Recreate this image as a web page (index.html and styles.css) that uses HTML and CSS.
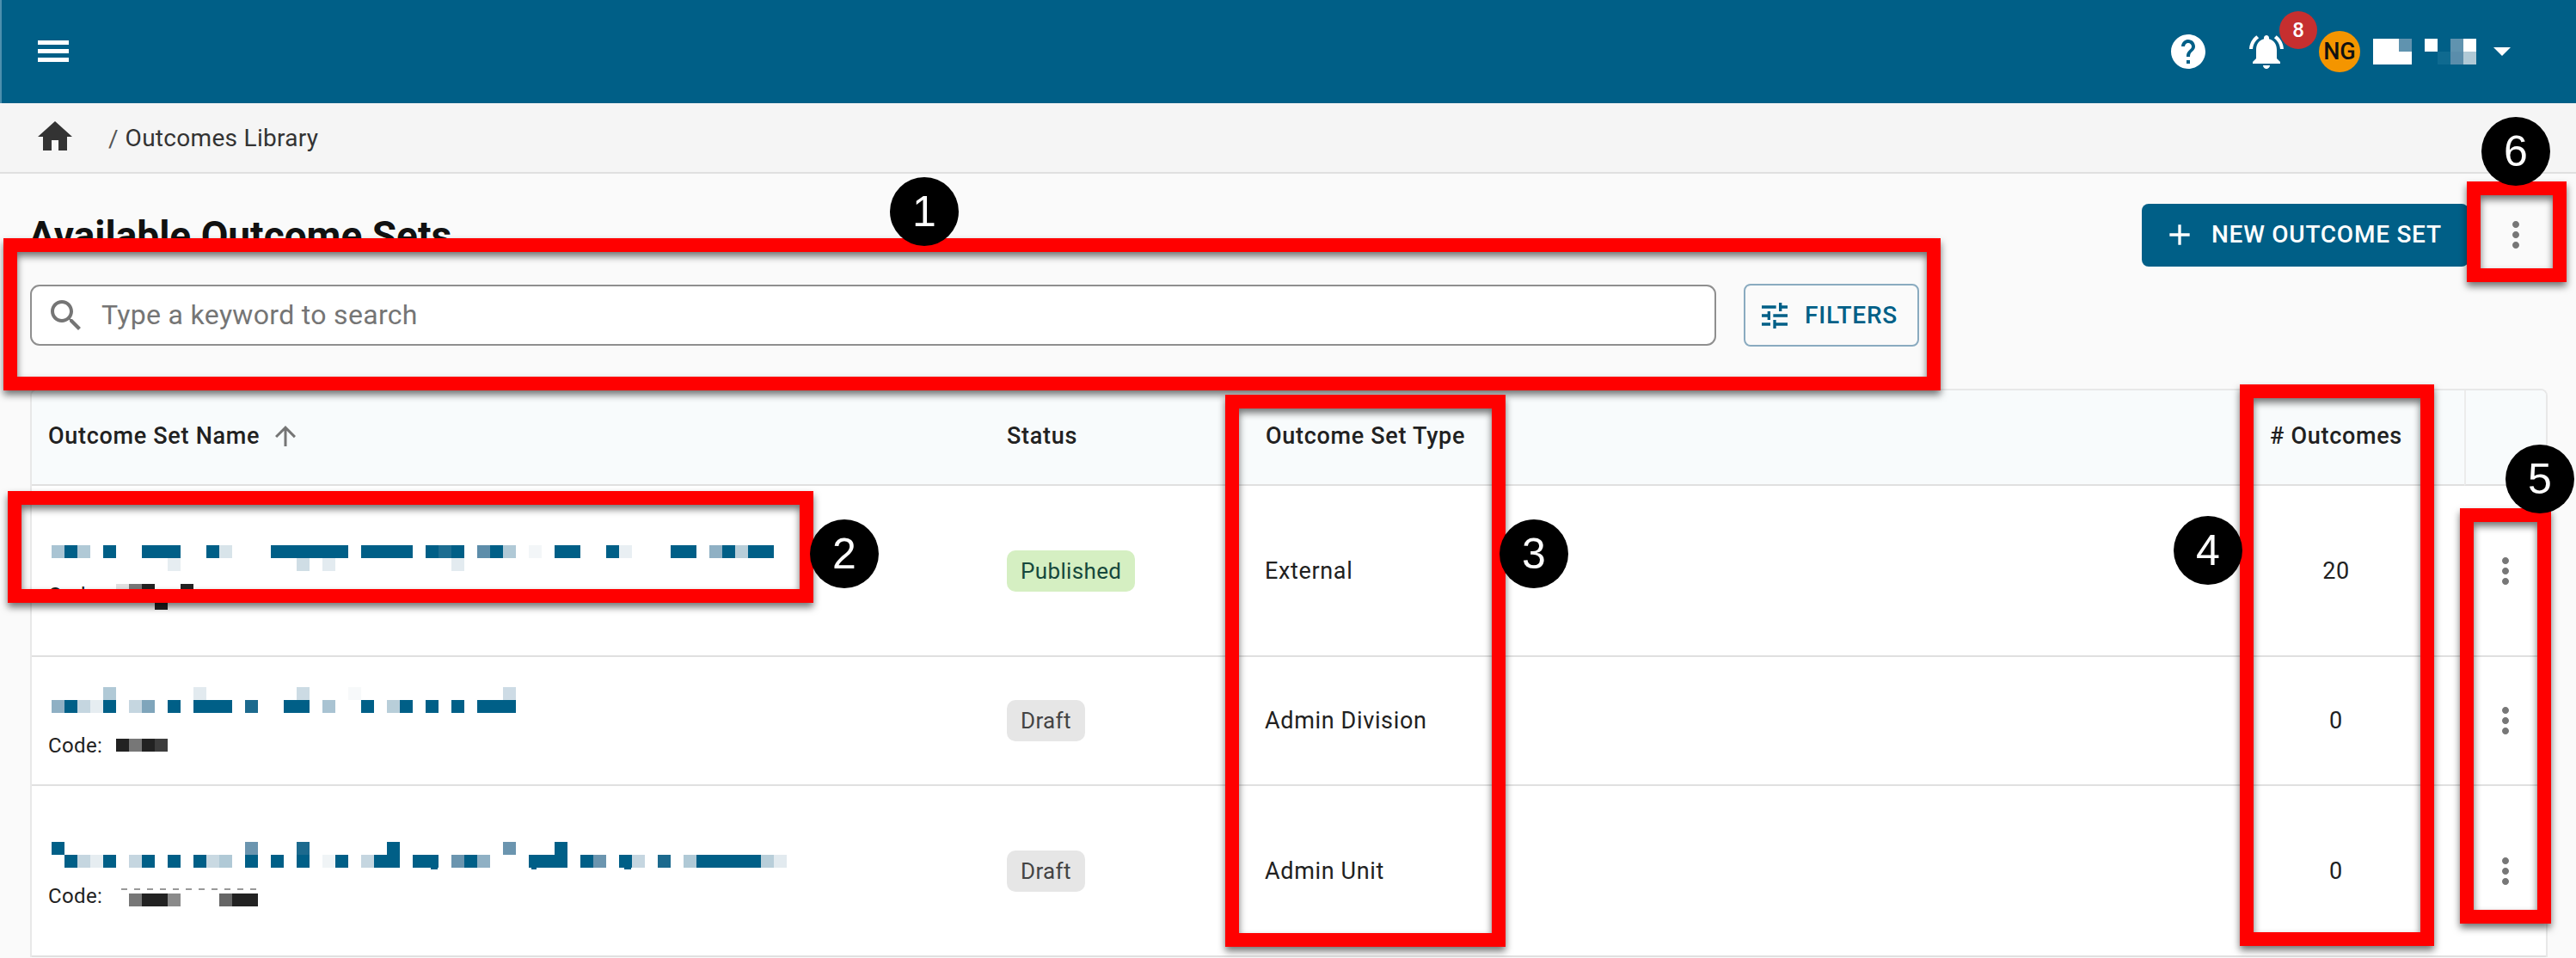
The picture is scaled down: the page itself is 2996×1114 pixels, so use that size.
FILE: index.html
```html
<!DOCTYPE html>
<html lang="en">
<head>
<meta charset="utf-8">
<title>Outcomes Library</title>
<link rel="stylesheet" href="styles.css">
</head>
<body>
<header class="topbar">
  <button class="menu" aria-label="Menu"><span></span><span></span><span></span></button>
  <div class="top-actions">
    <svg class="help" viewBox="0 0 24 24"><path d="M12 2C6.48 2 2 6.48 2 12s4.48 10 10 10 10-4.48 10-10S17.52 2 12 2zm1 17h-2v-2h2v2zm2.07-7.75l-.9.92C13.45 12.9 13 13.5 13 15h-2v-.5c0-1.1.45-2.1 1.17-2.83l1.24-1.26c.37-.36.59-.86.59-1.41 0-1.1-.9-2-2-2s-2 .9-2 2H8c0-2.21 1.79-4 4-4s4 1.79 4 4c0 .88-.36 1.68-.93 2.25z"/></svg>
    <div class="bell-wrap">
      <svg class="bell" viewBox="0 0 24 24"><path d="M7.58 4.08L6.15 2.65C3.75 4.48 2.17 7.3 2.03 10.5h2c.15-2.65 1.51-4.97 3.55-6.42zm12.39 6.42h2c-.15-3.2-1.73-6.02-4.12-7.85l-1.42 1.43c2.02 1.45 3.39 3.77 3.54 6.42zM18 11c0-3.07-1.64-5.64-4.5-6.32V4c0-.83-.67-1.5-1.5-1.5s-1.5.67-1.5 1.5v.68C7.63 5.36 6 7.92 6 11v5l-2 2v1h16v-1l-2-2v-5zm-6 11c.14 0 .27-.01.4-.04.65-.14 1.18-.58 1.44-1.18.1-.24.15-.5.15-.78h-4c.01 1.1.9 2 2.01 2z"/></svg>
      <span class="badge">8</span>
    </div>
    <span class="avatar">NG</span>
    <svg class="user-mosaic" viewBox="0 0 8 2" shape-rendering="crispEdges">
      <rect x="0" y="0" width="2" height="2" fill="#fff"/><rect x="2" y="0" width="1" height="1" fill="#6093af"/><rect x="2" y="1" width="1" height="1" fill="#fff"/>
      <rect x="4" y="0" width="1" height="1" fill="#fff"/><rect x="5" y="1" width="1" height="1" fill="#0f6a90"/>
      <rect x="6" y="0" width="1" height="1" fill="#6093af"/><rect x="6" y="1" width="1" height="1" fill="#5a8dab"/>
      <rect x="7" y="0" width="1" height="1" fill="#fff"/><rect x="7" y="1" width="1" height="1" fill="#b0c9d6"/>
    </svg>
    <span class="caret"></span>
  </div>
</header>

<nav class="crumbs">
  <svg class="home" viewBox="0 0 24 24"><path d="M10 20v-6h4v6h5v-8h3L12 3 2 12h3v8z"/></svg>
  <span class="crumb-sep">/</span>
  <span class="crumb-text">Outcomes Library</span>
</nav>

<main class="main">
  <div class="title-row">
    <h1 class="title">Available Outcome Sets</h1>
    <div class="title-actions">
      <button class="btn-primary">
        <svg class="plus" viewBox="0 0 24 24"><path d="M19 13h-6v6h-2v-6H5v-2h6V5h2v6h6v2z"/></svg>
        <span class="btn-label">NEW OUTCOME SET</span>
      </button>
      <button class="icon-btn" aria-label="More"><svg class="dots" viewBox="0 0 24 24"><path d="M12 8c1.1 0 2-.9 2-2s-.9-2-2-2-2 .9-2 2 .9 2 2 2zm0 2c-1.1 0-2 .9-2 2s.9 2 2 2 2-.9 2-2-.9-2-2-2zm0 6c-1.1 0-2 .9-2 2s.9 2 2 2 2-.9 2-2-.9-2-2-2z"/></svg></button>
    </div>
  </div>

  <div class="search-row">
    <label class="search">
      <svg class="search-icon" viewBox="0 0 24 24"><path d="M15.5 14h-.79l-.28-.27C15.41 12.59 16 11.11 16 9.5 16 5.91 13.09 3 9.5 3S3 5.91 3 9.5 5.91 16 9.5 16c1.61 0 3.09-.59 4.23-1.57l.27.28v.79l5 4.99L20.49 19l-4.99-5zm-6 0C7.01 14 5 11.99 5 9.5S7.01 5 9.5 5 14 7.01 14 9.5 11.99 14 9.5 14z"/></svg>
      <span class="placeholder">Type a keyword to search</span>
    </label>
    <button class="btn-outline">
      <svg class="tune" viewBox="0 0 24 24"><path d="M3 17v2h6v-2H3zM3 5v2h10V5H3zm10 16v-2h8v-2h-8v-2h-2v6h2zM7 9v2H3v2h4v2h2V9H7zm14 4v-2H11v2h10zm-6-4h2V7h4V5h-4V3h-2v6z"/></svg>
      FILTERS
    </button>
  </div>

  <div class="table-wrap">
    <table class="table">
      <colgroup>
        <col class="c-name"><col class="c-status"><col class="c-type"><col class="c-count"><col class="c-act">
      </colgroup>
      <thead>
        <tr>
          <th class="name-head"><span class="sort">Outcome Set Name <svg class="arrow" viewBox="0 0 24 24"><path d="M4 12l1.41 1.41L11 7.83V20h2V7.83l5.58 5.59L20 12l-8-8-8 8z"/></svg></span></th>
          <th>Status</th>
          <th>Outcome Set Type</th>
          <th class="center">&#35; Outcomes</th>
          <th class="act-head"></th>
        </tr>
      </thead>
      <tbody>
        <tr class="r1">
          <td class="name">
            <svg class="mosaic" viewBox="0 0 58 2" shape-rendering="crispEdges">
              <rect x="0" y="0" width="1" height="1" fill="#a9c4d3"/><rect class="d" x="1" y="0" width="1" height="1"/><rect x="2" y="0" width="1" height="1" fill="#b0c9d6"/><rect class="d" x="4" y="0" width="1" height="1"/><rect class="d" x="7" y="0" width="3" height="1"/><rect class="d" x="12" y="0" width="1" height="1"/><rect x="13" y="0" width="1" height="1" fill="#d8e4ea"/><rect class="d" x="17" y="0" width="6" height="1"/><rect class="d" x="24" y="0" width="4" height="1"/><rect class="d" x="29" y="0" width="3" height="1"/><rect x="30" y="0" width="1" height="1" fill="#1c6d91"/><rect x="33" y="0" width="1" height="1" fill="#5d8daa"/><rect class="d" x="34" y="0" width="1" height="1"/><rect x="35" y="0" width="1" height="1" fill="#b0c9d6"/><rect x="37" y="0" width="1" height="1" fill="#f3f6f8"/><rect class="d" x="39" y="0" width="2" height="1"/><rect class="d" x="43" y="0" width="1" height="1"/><rect x="44" y="0" width="1" height="1" fill="#e9eff3"/><rect class="d" x="48" y="0" width="2" height="1"/><rect x="51" y="0" width="1" height="1" fill="#8fb0c4"/><rect class="d" x="52" y="0" width="1" height="1"/><rect x="53" y="0" width="1" height="1" fill="#b8ced9"/><rect class="d" x="54" y="0" width="2" height="1"/>
              <rect x="9" y="1" width="1" height="1" fill="#e6edf1"/><rect x="19" y="1" width="1" height="1" fill="#cfdde5"/><rect x="21" y="1" width="1" height="1" fill="#e3ebf0"/><rect x="31" y="1" width="1" height="1" fill="#e3ebf0"/>
            </svg>
            <div class="code code-r1">
              <span class="code-label">Code:</span>
              <svg class="code-mosaic cm1" viewBox="0 0 6 2" shape-rendering="crispEdges"><rect x="0" y="0" width="1" height="1" fill="#e0e0e0"/><rect x="1" y="0" width="1" height="1" fill="#777"/><rect x="2" y="0" width="1" height="1" fill="#222"/><rect x="5" y="0" width="1" height="1" fill="#222"/><rect x="3" y="1" width="1" height="1" fill="#222"/></svg>
            </div>
          </td>
          <td><span class="chip chip-green">Published</span></td>
          <td>External</td>
          <td class="center">20</td>
          <td class="act"><svg class="dots" viewBox="0 0 24 24"><path d="M12 8c1.1 0 2-.9 2-2s-.9-2-2-2-2 .9-2 2 .9 2 2 2zm0 2c-1.1 0-2 .9-2 2s.9 2 2 2 2-.9 2-2-.9-2-2-2zm0 6c-1.1 0-2 .9-2 2s.9 2 2 2 2-.9 2-2-.9-2-2-2z"/></svg></td>
        </tr>
        <tr class="r2">
          <td class="name">
            <svg class="mosaic" viewBox="0 0 58 2" shape-rendering="crispEdges">
              <rect x="4" y="0" width="1" height="1" fill="#b0c9d6"/><rect x="11" y="0" width="1" height="1" fill="#e2eaef"/><rect x="19" y="0" width="1" height="1" fill="#ccdbe4"/><rect x="23" y="0" width="1" height="1" fill="#f7f9fa"/><rect x="35" y="0" width="1" height="1" fill="#cddbe5"/>
              <rect x="0" y="1" width="1" height="1" fill="#8fb0c4"/><rect class="d" x="1" y="1" width="1" height="1"/><rect x="2" y="1" width="1" height="1" fill="#c5d6e0"/><rect x="3" y="1" width="1" height="1" fill="#e6edf1"/><rect class="d" x="4" y="1" width="1" height="1"/><rect x="6" y="1" width="1" height="1" fill="#c5d6e0"/><rect x="7" y="1" width="1" height="1" fill="#7fa5bb"/><rect class="d" x="9" y="1" width="1" height="1"/><rect class="d" x="11" y="1" width="3" height="1"/><rect x="15" y="1" width="1" height="1" fill="#1c6a8e"/><rect class="d" x="18" y="1" width="2" height="1"/><rect x="21" y="1" width="1" height="1" fill="#a9c3d2"/><rect class="d" x="24" y="1" width="1" height="1"/><rect x="26" y="1" width="1" height="1" fill="#b8ced9"/><rect class="d" x="27" y="1" width="1" height="1"/><rect class="d" x="29" y="1" width="1" height="1"/><rect class="d" x="31" y="1" width="1" height="1"/><rect class="d" x="33" y="1" width="3" height="1"/>
            </svg>
            <div class="code code-r2">
              <span class="code-label">Code:</span>
              <svg class="code-mosaic cm2" viewBox="0 0 4 1" shape-rendering="crispEdges"><rect x="0" y="0" width="1" height="1" fill="#222"/><rect x="1" y="0" width="1" height="1" fill="#777"/><rect x="2" y="0" width="1" height="1" fill="#222"/><rect x="3" y="0" width="1" height="1" fill="#3d3d3d"/></svg>
            </div>
          </td>
          <td><span class="chip chip-gray">Draft</span></td>
          <td>Admin Division</td>
          <td class="center">0</td>
          <td class="act"><svg class="dots" viewBox="0 0 24 24"><path d="M12 8c1.1 0 2-.9 2-2s-.9-2-2-2-2 .9-2 2 .9 2 2 2zm0 2c-1.1 0-2 .9-2 2s.9 2 2 2 2-.9 2-2-.9-2-2-2zm0 6c-1.1 0-2 .9-2 2s.9 2 2 2 2-.9 2-2-.9-2-2-2z"/></svg></td>
        </tr>
        <tr class="r3">
          <td class="name">
            <svg class="mosaic" viewBox="0 0 58 2" shape-rendering="crispEdges">
              <rect class="d" x="0" y="0" width="1" height="1"/><rect x="15" y="0" width="1" height="1" fill="#6b95af"/><rect x="19" y="0" width="1" height="1" fill="#1c6a8e"/><rect class="d" x="26" y="0" width="1" height="1"/><rect x="35" y="0" width="1" height="1" fill="#6b95af"/><rect class="d" x="39" y="0" width="1" height="1"/>
              <rect class="d" x="1" y="1" width="1" height="1"/><rect x="2" y="1" width="1" height="1" fill="#c5d6e0"/><rect x="3" y="1" width="1" height="1" fill="#e6edf1"/><rect class="d" x="4" y="1" width="1" height="1"/><rect x="6" y="1" width="1" height="1" fill="#c5d6e0"/><rect class="d" x="7" y="1" width="1" height="1"/><rect class="d" x="9" y="1" width="1" height="1"/><rect class="d" x="11" y="1" width="1" height="1"/><rect x="12" y="1" width="1" height="1" fill="#c9d9e2"/><rect x="13" y="1" width="1" height="1" fill="#b0c9d6"/><rect class="d" x="15" y="1" width="1" height="1"/><rect class="d" x="17" y="1" width="1" height="1"/><rect class="d" x="19" y="1" width="1" height="1"/><rect x="21" y="1" width="1" height="1" fill="#f0f4f6"/><rect class="d" x="22" y="1" width="1" height="1"/><rect x="24" y="1" width="1" height="1" fill="#c5d6e0"/><rect class="d" x="25" y="1" width="2" height="1"/><rect class="d" x="28" y="1" width="2" height="1"/><rect x="31" y="1" width="1" height="1" fill="#6b95af"/><rect class="d" x="32" y="1" width="1" height="1"/><rect x="33" y="1" width="1" height="1" fill="#8fb0c4"/><rect class="d" x="37" y="1" width="3" height="1"/><rect class="d" x="41" y="1" width="1" height="1"/><rect x="42" y="1" width="1" height="1" fill="#6b95af"/><rect class="d" x="44" y="1" width="1" height="1"/><rect x="45" y="1" width="1" height="1" fill="#c5d6e0"/><rect x="47" y="1" width="1" height="1" fill="#1c6a8e"/><rect x="49" y="1" width="1" height="1" fill="#b0c9d6"/><rect class="d" x="50" y="1" width="5" height="1"/><rect x="55" y="1" width="1" height="1" fill="#b8ced9"/><rect x="56" y="1" width="1" height="1" fill="#e2eaef"/>
              <rect class="d" x="29.4" y="2" width=".5" height=".1"/><rect class="d" x="37.2" y="2" width=".4" height=".1"/><rect class="d" x="44.4" y="2" width=".5" height=".1"/>
            </svg>
            <div class="code code-r3">
              <span class="code-label">Code:</span>
              <span class="code-dash"></span>
              <svg class="code-mosaic cm3" viewBox="0 0 10 1" shape-rendering="crispEdges"><rect x="0" y="0" width="1" height="1" fill="#777"/><rect x="1" y="0" width="2" height="1" fill="#222"/><rect x="3" y="0" width="1" height="1" fill="#8a8a8a"/><rect x="7" y="0" width="1" height="1" fill="#666"/><rect x="8" y="0" width="2" height="1" fill="#222"/></svg>
            </div>
          </td>
          <td><span class="chip chip-gray">Draft</span></td>
          <td>Admin Unit</td>
          <td class="center">0</td>
          <td class="act"><svg class="dots" viewBox="0 0 24 24"><path d="M12 8c1.1 0 2-.9 2-2s-.9-2-2-2-2 .9-2 2 .9 2 2 2zm0 2c-1.1 0-2 .9-2 2s.9 2 2 2 2-.9 2-2-.9-2-2-2zm0 6c-1.1 0-2 .9-2 2s.9 2 2 2 2-.9 2-2-.9-2-2-2z"/></svg></td>
        </tr>
      </tbody>
    </table>
  </div>
</main>

<div class="anno anno1"></div>
<div class="anno anno2"></div>
<div class="anno anno3"></div>
<div class="anno anno4"></div>
<div class="anno anno5"></div>
<div class="anno anno6"></div>
<span class="num num1">1</span>
<span class="num num2">2</span>
<span class="num num3">3</span>
<span class="num num4">4</span>
<span class="num num5">5</span>
<span class="num num6">6</span>
</body>
</html>
```
FILE: styles.css
```css
* { box-sizing: border-box; }
html, body { margin: 0; height: 1114px; overflow: hidden; }
body { position: relative; background: #fafafa; font-family: Roboto, "Liberation Sans", sans-serif; color: #212121; }
button { font-family: inherit; cursor: pointer; }
svg { display: block; flex: none; }

/* top bar */
.topbar { height: 120px; background: #005f87; border-left: 2px solid #4d8fae; display: flex; align-items: center; justify-content: space-between; padding: 0 76px 0 42px; }
.menu { width: 36px; height: 25px; padding: 0; border: 0; background: none; display: flex; flex-direction: column; justify-content: space-between; margin-top: -2px; }
.menu span { display: block; height: 5px; background: #fff; }
.top-actions { display: flex; align-items: center; }
.help { width: 48px; height: 48px; fill: #fff; }
.bell-wrap { position: relative; margin-left: 43px; width: 48px; height: 48px; }
.bell { width: 48px; height: 48px; fill: #fff; }
.badge { position: absolute; left: 39px; top: -23px; width: 44px; height: 44px; border-radius: 50%; background: #c62f2f; color: #fff; font-size: 24px; font-weight: 500; display: flex; align-items: center; justify-content: center; }
.avatar { margin-left: 37px; width: 48px; height: 48px; border-radius: 50%; background: #f49500; color: #111; font-size: 27px; font-weight: 500; display: flex; align-items: center; justify-content: center; }
.user-mosaic { margin-left: 15px; width: 120px; height: 30px; }
.caret { margin-left: 20px; width: 0; height: 0; border-left: 10px solid transparent; border-right: 10px solid transparent; border-top: 10px solid #fff; }

/* breadcrumb */
.crumbs { height: 82px; background: #f5f5f5; border-bottom: 2px solid #e0e0e0; display: flex; align-items: center; padding: 0 0 0 40px; color: #333; }
.home { width: 48px; height: 48px; fill: #333; margin-top: -3px; }
.crumb-sep { margin-left: 38px; font-size: 28px; color: #555; margin-top: 2px; }
.crumb-text { margin-left: 8px; font-size: 28px; letter-spacing: .3px; margin-top: 1px; }

/* main */
.main { padding: 34px 33px 0 35px; }
.title-row { display: flex; justify-content: space-between; align-items: flex-start; height: 73px; }
.title { margin: 14px 0 0 -2px; font-size: 46px; line-height: 48px; font-weight: 700; color: #111; white-space: nowrap; }
.title-actions { display: flex; align-items: center; gap: 18px; }
.btn-primary { height: 73px; width: 380px; padding: 0 0 0 24px; border: 0; border-radius: 8px; background: #005f87; color: #fff; font-size: 28px; font-weight: 500; letter-spacing: .75px; display: flex; align-items: center; gap: 17px; }
.btn-label { margin-top: -2px; }
.plus { width: 40px; height: 40px; fill: #fff; }
.icon-btn { width: 74px; height: 74px; padding: 0; border: 0; background: none; display: flex; align-items: center; justify-content: center; }
.dots { width: 48px; height: 48px; fill: #777; }

.search-row { display: flex; align-items: center; gap: 32px; margin: 21px 731px 0 0; height: 73px; }
.search { flex: 1; height: 71px; background: #fff; border: 2px solid #8f8f8f; border-radius: 11px; display: flex; align-items: center; gap: 17px; padding-left: 16px; }
.search-icon { width: 48px; height: 48px; fill: #757575; }
.placeholder { font-size: 32px; color: #757575; letter-spacing: .32px; margin-top: -1px; }
.btn-outline { width: 204px; height: 73px; padding: 0 0 0 14px; background: none; border: 2px solid #8aabc0; border-radius: 8px; color: #005f87; font-size: 28px; font-weight: 500; letter-spacing: .8px; display: flex; align-items: center; gap: 15px; }
.tune { width: 40px; height: 40px; fill: #005f87; }

/* table */
.table-wrap { margin-top: 49px; background: #fff; border: 2px solid #e8e8e8; border-bottom: 0; border-radius: 8px 8px 0 0; overflow: hidden; }
.table { width: 2924px; table-layout: fixed; border-collapse: separate; border-spacing: 0; }
.c-name { width: 1112px; }
.c-status { width: 301px; }
.c-type { width: 1118px; }
.c-count { width: 298px; }
.c-act { width: 95px; }
th { height: 111px; padding: 0 22px 3px; background: #f8fbfc; border-bottom: 2px solid #e0e0e0; text-align: left; font-size: 27px; font-weight: 500; letter-spacing: .7px; color: #212121; }
th.name-head { padding-left: 19px; }
td { padding: 0 21px; border-bottom: 2px solid #e0e0e0; font-size: 27px; letter-spacing: .65px; color: #212121; vertical-align: middle; }
.center { text-align: center; }
.act-head { border-left: 2px solid #ececec; }
.act { padding: 0; }
.act .dots { margin: 0 auto; }
.sort { display: inline-flex; align-items: center; gap: 12px; }
.arrow { width: 36px; height: 36px; fill: #757575; }
.r1 td { height: 199px; }
.r2 td { height: 150px; }
.r3 td { height: 199px; }
td.name { vertical-align: top; padding-left: 19px; }
.r1 .name { padding-top: 69px; }
.r2 .name { padding-top: 35px; }
.r3 .name { padding-top: 65px; }
.mosaic { width: 870px; height: 30px; margin-left: 4px; overflow: visible; }
.d { fill: #005f87; }
.code { position: relative; display: flex; align-items: flex-start; height: 30px; }
.code-r1 { margin-top: 13px; }
.code-r2 { margin-top: 23px; }
.code-r3 { margin-top: 18px; }
.code-label { width: 79px; font-size: 24px; line-height: 30px; letter-spacing: .35px; color: #212121; }
.code-mosaic { height: 15px; }
.cm1 { width: 90px; height: 30px; margin-top: 2px; }
.cm2 { width: 60px; margin-top: 7px; }
.cm3 { width: 150px; margin: 12px 0 0 15px; }
.code-dash { position: absolute; left: 85px; top: 6px; width: 161px; height: 2px; background: repeating-linear-gradient(90deg, #999 0 7px, transparent 7px 15px); }
.chip { display: inline-flex; align-items: center; height: 48px; padding: 0 16px; border-radius: 10px; font-size: 26px; letter-spacing: .35px; vertical-align: middle; margin-left: 1px; }
.chip-green { background: #d5efc2; color: #16483c; }
.chip-gray { background: #e6e6e6; color: #444; }

/* annotations layered over the screenshot */
.anno { position: absolute; border: 16px solid #f00; filter: drop-shadow(0 5px 4px rgba(0,0,0,.55)); }
.anno1 { left: 4px; top: 277px; width: 2253px; height: 177px; }
.anno2 { left: 9px; top: 571px; width: 937px; height: 130px; }
.anno3 { left: 1425px; top: 459px; width: 326px; height: 642px; }
.anno4 { left: 2605px; top: 447px; width: 226px; height: 653px; }
.anno5 { left: 2861px; top: 591px; width: 106px; height: 483px; }
.anno6 { left: 2869px; top: 211px; width: 116px; height: 117px; }
.num { position: absolute; width: 80px; height: 80px; border-radius: 50%; background: #000; color: #fff; font-family: "Liberation Sans", Arial, sans-serif; font-size: 50px; line-height: 80px; text-align: center; }
.num1 { left: 1035px; top: 206px; }
.num2 { left: 942px; top: 604px; }
.num3 { left: 1744px; top: 604px; }
.num4 { left: 2528px; top: 600px; }
.num5 { left: 2914px; top: 517px; }
.num6 { left: 2886px; top: 136px; }
```
